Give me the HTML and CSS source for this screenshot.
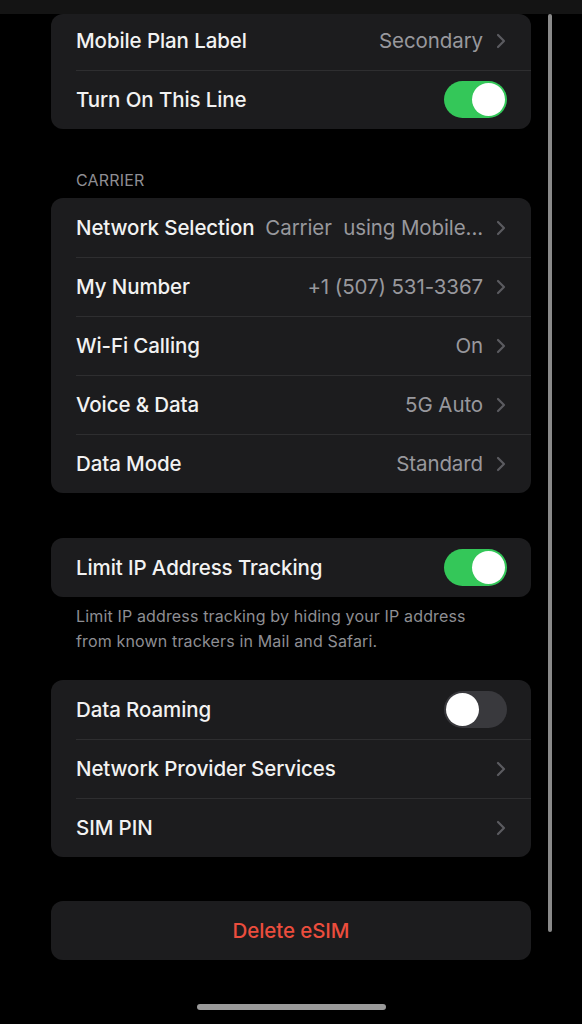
FILE: index.html
```html
<!DOCTYPE html>
<html lang="en">
<head>
    <meta charset="UTF-8">
    <meta name="viewport" content="width=device-width, initial-scale=1.0">
    <title>Cellular Plan</title>
    <link rel="stylesheet" href="styles.css">
</head>
<body>
    <div class="screen">
        <div class="top-bar"></div>

        <div class="content">
            <div class="group first">
                <div class="row short">
                    <span class="label">Mobile Plan Label</span>
                    <span class="value">Secondary</span>
                    <span class="chevron"><svg width="10" height="16" viewBox="0 0 10 16"><path d="M2 2l6 6-6 6" fill="none" stroke="currentColor" stroke-width="2.2" stroke-linecap="round" stroke-linejoin="round"/></svg></span>
                </div>
                <div class="row">
                    <span class="label">Turn On This Line</span>
                    <span class="toggle on"><span class="knob"></span></span>
                </div>
            </div>

            <div class="section-title">CARRIER</div>
            <div class="group">
                <div class="row">
                    <span class="label">Network Selection</span>
                    <span class="value">Carrier&nbsp; using Mobile...</span>
                    <span class="chevron"><svg width="10" height="16" viewBox="0 0 10 16"><path d="M2 2l6 6-6 6" fill="none" stroke="currentColor" stroke-width="2.2" stroke-linecap="round" stroke-linejoin="round"/></svg></span>
                </div>
                <div class="row">
                    <span class="label">My Number</span>
                    <span class="value">+1 (507) 531-3367</span>
                    <span class="chevron"><svg width="10" height="16" viewBox="0 0 10 16"><path d="M2 2l6 6-6 6" fill="none" stroke="currentColor" stroke-width="2.2" stroke-linecap="round" stroke-linejoin="round"/></svg></span>
                </div>
                <div class="row">
                    <span class="label">Wi-Fi Calling</span>
                    <span class="value">On</span>
                    <span class="chevron"><svg width="10" height="16" viewBox="0 0 10 16"><path d="M2 2l6 6-6 6" fill="none" stroke="currentColor" stroke-width="2.2" stroke-linecap="round" stroke-linejoin="round"/></svg></span>
                </div>
                <div class="row">
                    <span class="label">Voice &amp; Data</span>
                    <span class="value">5G Auto</span>
                    <span class="chevron"><svg width="10" height="16" viewBox="0 0 10 16"><path d="M2 2l6 6-6 6" fill="none" stroke="currentColor" stroke-width="2.2" stroke-linecap="round" stroke-linejoin="round"/></svg></span>
                </div>
                <div class="row">
                    <span class="label">Data Mode</span>
                    <span class="value">Standard</span>
                    <span class="chevron"><svg width="10" height="16" viewBox="0 0 10 16"><path d="M2 2l6 6-6 6" fill="none" stroke="currentColor" stroke-width="2.2" stroke-linecap="round" stroke-linejoin="round"/></svg></span>
                </div>
            </div>

            <div class="group spaced">
                <div class="row">
                    <span class="label">Limit IP Address Tracking</span>
                    <span class="toggle on"><span class="knob"></span></span>
                </div>
            </div>
            <p class="footer">Limit IP address tracking by hiding your IP address from known trackers in Mail and Safari.</p>

            <div class="group">
                <div class="row">
                    <span class="label">Data Roaming</span>
                    <span class="toggle"><span class="knob"></span></span>
                </div>
                <div class="row">
                    <span class="label">Network Provider Services</span>
                    <span class="chevron"><svg width="10" height="16" viewBox="0 0 10 16"><path d="M2 2l6 6-6 6" fill="none" stroke="currentColor" stroke-width="2.2" stroke-linecap="round" stroke-linejoin="round"/></svg></span>
                </div>
                <div class="row">
                    <span class="label">SIM PIN</span>
                    <span class="chevron"><svg width="10" height="16" viewBox="0 0 10 16"><path d="M2 2l6 6-6 6" fill="none" stroke="currentColor" stroke-width="2.2" stroke-linecap="round" stroke-linejoin="round"/></svg></span>
                </div>
            </div>

            <div class="group spaced-lg">
                <div class="row danger">Delete eSIM</div>
            </div>
        </div>

        <div class="scrollbar"></div>
        <div class="home-indicator"></div>
    </div>
</body>
</html>
```

FILE: styles.css
```css
body {
    margin: 0;
    background-color: #000;
    font-family: Inter, "Noto Sans", sans-serif;
    color: #fff;
}
.screen {
    position: relative;
    width: 582px;
    height: 1024px;
    overflow: hidden;
}
.top-bar {
    height: 14px;
    background-color: #141414;
}
.content {
    width: 480px;
    margin-left: 51px;
}
.group {
    background-color: #1c1c1e;
    border-radius: 12px;
    overflow: hidden;
}
.group.spaced {
    margin-top: 45px;
}
.group.spaced-lg {
    margin-top: 44px;
}
.row {
    display: flex;
    align-items: center;
    height: 59px;
    padding: 0 25px 0 25px;
    position: relative;
    font-size: 20.5px;
    letter-spacing: -0.1px;
}
.row.short {
    height: 53px;
    padding-bottom: 3px;
}
.row + .row::before {
    content: "";
    position: absolute;
    top: 0;
    left: 25px;
    right: 0;
    height: 1px;
    background-color: #2e2e30;
}
.label {
    flex: 0 0 auto;
    color: #f2f2f2;
    font-weight: 500;
}
.value {
    flex: 1;
    text-align: right;
    color: #98989d;
    white-space: nowrap;
    overflow: hidden;
    margin-left: 8px;
}
.chevron {
    margin-left: 13px;
    color: #5b5b60;
    display: flex;
}
.label + .chevron {
    margin-left: auto;
}
.toggle {
    margin-left: auto;
    width: 63px;
    height: 37px;
    border-radius: 19px;
    background-color: #39393d;
    position: relative;
    flex: 0 0 auto;
    margin-right: -1px;
}
.toggle.on {
    background-color: #34c759;
}
.knob {
    position: absolute;
    top: 2px;
    left: 2px;
    width: 33px;
    height: 33px;
    border-radius: 50%;
    background-color: #fff;
}
.toggle.on .knob {
    left: 28px;
}
.section-title {
    margin: 42px 0 9px 25px;
    font-size: 16px;
    color: #8e8e93;
    letter-spacing: 0.2px;
    line-height: 18px;
}
.footer {
    margin: 7px 0 26px 25px;
    font-size: 16px;
    line-height: 25px;
    color: #8e8e93;
    padding-right: 40px;
    letter-spacing: 0.15px;
}
.danger {
    justify-content: center;
    color: #eb4d3d;
    font-weight: 500;
}
.scrollbar {
    position: absolute;
    left: 548px;
    top: 14px;
    width: 4px;
    height: 918px;
    border-radius: 2px;
    background-color: #8a8a8a;
}
.home-indicator {
    position: absolute;
    left: 197px;
    top: 1004px;
    width: 189px;
    height: 6px;
    border-radius: 3px;
    background-color: #9a9a9a;
}
```
